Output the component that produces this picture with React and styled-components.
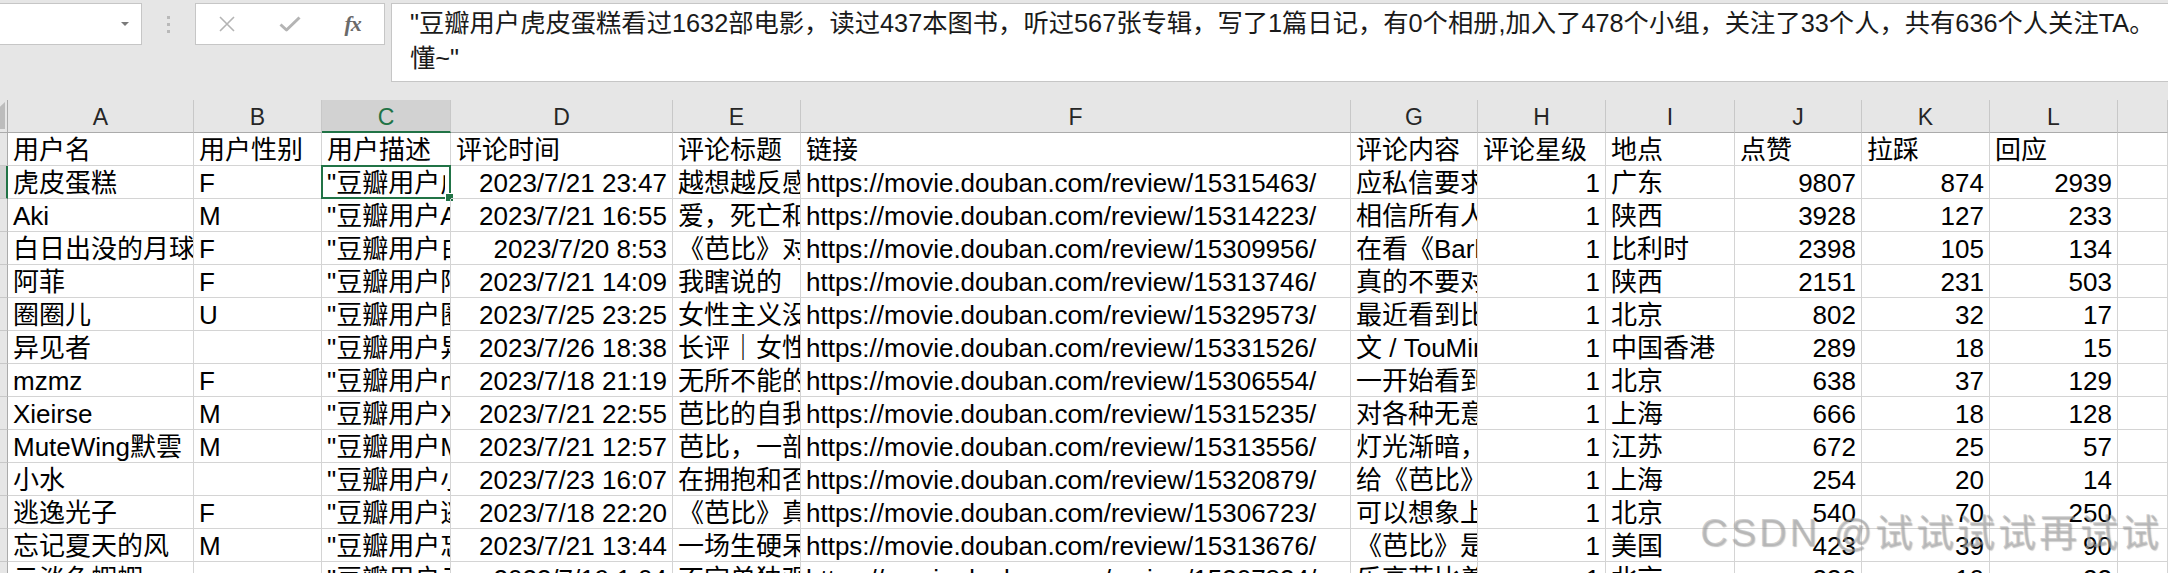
import React from "react";
import styled, { createGlobalStyle } from "styled-components";

const GlobalStyle = createGlobalStyle`
  html, body { margin: 0; padding: 0; background: #e6e6e6; overflow: hidden; }
  body { font-family: "Liberation Sans", "Noto Sans CJK SC", sans-serif; color: #000; }
  * { box-sizing: border-box; }
`;

const GREEN = "#217346";

const Page = styled.div`
  position: relative;
  width: 2168px;
  height: 573px;
  overflow: hidden;
  background: #e6e6e6;
`;

/* ---------- formula bar ---------- */
const TopBar = styled.div`
  display: flex;
  align-items: flex-start;
  height: 100px;
  padding-top: 3px;
`;

const NameBox = styled.div`
  width: 142px;
  height: 42px;
  background: #fff;
  border: 1px solid #c6c6c6;
  border-left: none;
  display: flex;
  align-items: center;
  justify-content: flex-end;
  padding-right: 12px;
`;

const DropArrow = styled.span`
  width: 0;
  height: 0;
  border-left: 4px solid transparent;
  border-right: 4px solid transparent;
  border-top: 4px solid #7a7a7a;
`;

const Grip = styled.div`
  width: 53px;
  height: 42px;
  display: flex;
  flex-direction: column;
  align-items: center;
  justify-content: center;
  gap: 4px;
`;

const GripDot = styled.span`
  width: 3px;
  height: 3px;
  background: #b9b9b9;
`;

const FxBox = styled.div`
  width: 190px;
  height: 42px;
  background: #fff;
  border: 1px solid #c6c6c6;
  display: grid;
  grid-template-columns: repeat(3, 1fr);
  align-items: center;
  justify-items: center;
`;

const FxLabel = styled.span`
  font-family: "Liberation Serif", serif;
  font-style: italic;
  font-weight: bold;
  font-size: 22px;
  color: #6a6a6a;
  letter-spacing: -1px;
`;

const FormulaBox = styled.div`
  flex: 1;
  margin-left: 6px;
  height: 79px;
  background: #fff;
  border: 1px solid #c6c6c6;
  border-right: none;
  padding: 2px 0 0 18px;
  font-size: 25.3px;
  line-height: 35px;
  white-space: nowrap;
  overflow: hidden;
  color: #1a1a1a;
`;

/* ---------- sheet grid ---------- */
const Sheet = styled.div`
  display: grid;
  grid-template-columns: 8px 186px 128px 129px 222px 128px 550px 127px 128px 129px 127px 128px 128px 1fr;
  grid-template-rows: 33px;
  grid-auto-rows: 33px;
  background: #fff;
`;

const Corner = styled.div`
  position: relative;
  background: #e6e6e6;
  border-right: 1px solid #ababab;
  border-bottom: 1px solid #ababab;
  &::after {
    content: "";
    position: absolute;
    left: 0;
    top: 2px;
    width: 5px;
    height: 27px;
    background: #bcbcbc;
    clip-path: polygon(100% 0, 100% 100%, 0 100%, 0 18%);
  }
`;

const ColHead = styled.div`
  background: ${(p) => (p.$selected ? "#d2d2d2" : "#e6e6e6")};
  color: ${(p) => (p.$selected ? GREEN : "#262626")};
  border-right: 1px solid #c8c8c8;
  border-bottom: ${(p) => (p.$selected ? `2px solid ${GREEN}` : "1px solid #ababab")};
  font-size: 23px;
  line-height: 34px;
  text-align: center;
`;

const RowHead = styled.div`
  background: ${(p) => (p.$selected ? "#d2d2d2" : "#e6e6e6")};
  border-right: ${(p) => (p.$selected ? `2px solid ${GREEN}` : "1px solid #ababab")};
  border-bottom: 1px solid #c8c8c8;
`;

const Cell = styled.div`
  position: relative;
  border-right: 1px solid #d4d4d4;
  border-bottom: 1px solid #d4d4d4;
  padding: 0 5px;
  font-size: 26px;
  line-height: 34px;
  white-space: nowrap;
  overflow: ${(p) => (p.$active ? "visible" : "hidden")};
  text-align: ${(p) => (p.$num ? "right" : "left")};
`;

const CellText = styled.span`
  display: block;
  overflow: hidden;
`;

const ActiveFrame = styled.span`
  position: absolute;
  left: -1px;
  top: -1px;
  right: -1px;
  bottom: -1px;
  border: 2px solid ${GREEN};
  pointer-events: none;
  &::after {
    content: "";
    position: absolute;
    right: -5px;
    bottom: -5px;
    width: 7px;
    height: 7px;
    background: ${GREEN};
    border: 1px solid #fff;
  }
`;

const Watermark = styled.div`
  position: absolute;
  right: 6px;
  bottom: 16px;
  font-family: "Liberation Sans", "Noto Sans CJK SC", sans-serif;
  font-size: 38px;
  letter-spacing: 3px;
  color: rgba(170, 170, 170, 0.55);
  text-shadow: 1px 1px 1px rgba(90, 90, 90, 0.35);
  pointer-events: none;
  white-space: nowrap;
`;

const COLS = ["A", "B", "C", "D", "E", "F", "G", "H", "I", "J", "K", "L", ""];
const NUMERIC = [false, false, false, true, false, false, false, true, false, true, true, true, false];

const HEADER = ["用户名", "用户性别", "用户描述", "评论时间", "评论标题", "链接", "评论内容", "评论星级", "地点", "点赞", "拉踩", "回应", ""];

const url = (id) => `https://movie.douban.com/review/${id}/`;
const desc = (n) => `"豆瓣用户${n}看过很多部电影，读过很多本图书"`;

const ROWS = [
  ["虎皮蛋糕", "F", desc("虎皮蛋糕"), "2023/7/21 23:47", "越想越反感", url(15315463), "应私信要求补充", "1", "广东", "9807", "874", "2939"],
  ["Aki", "M", desc("Aki"), "2023/7/21 16:55", "爱，死亡和机器人", url(15314223), "相信所有人都会", "1", "陕西", "3928", "127", "233"],
  ["白日出没的月球", "F", desc("白日出没的月球"), "2023/7/20 8:53", "《芭比》对男性", url(15309956), "在看《Barbie》之前", "1", "比利时", "2398", "105", "134"],
  ["阿菲", "F", desc("阿菲"), "2023/7/21 14:09", "我瞎说的", url(15313746), "真的不要对这部", "1", "陕西", "2151", "231", "503"],
  ["圈圈儿", "U", desc("圈圈儿"), "2023/7/25 23:25", "女性主义没有", url(15329573), "最近看到比较多", "1", "北京", "802", "32", "17"],
  ["异见者", "", desc("异见者"), "2023/7/26 18:38", "长评｜女性主义", url(15331526), "文 / TouMing", "1", "中国香港", "289", "18", "15"],
  ["mzmz", "F", desc("mzmz"), "2023/7/18 21:19", "无所不能的芭比", url(15306554), "一开始看到预告", "1", "北京", "638", "37", "129"],
  ["Xieirse", "M", desc("Xieirse"), "2023/7/21 22:55", "芭比的自我觉醒", url(15315235), "对各种无意义的", "1", "上海", "666", "18", "128"],
  ["MuteWing默雲", "M", desc("MuteWing默雲"), "2023/7/21 12:57", "芭比，一部电影", url(15313556), "灯光渐暗，影片", "1", "江苏", "672", "25", "57"],
  ["小水", "", desc("小水"), "2023/7/23 16:07", "在拥抱和否定之间", url(15320879), "给《芭比》打分", "1", "上海", "254", "20", "14"],
  ["逃逸光子", "F", desc("逃逸光子"), "2023/7/18 22:20", "《芭比》真的是", url(15306723), "可以想象上映后", "1", "北京", "540", "70", "250"],
  ["忘记夏天的风", "M", desc("忘记夏天的风"), "2023/7/21 13:44", "一场生硬呆板的", url(15313676), "《芭比》是一部", "1", "美国", "423", "39", "90"],
  ["云淡色蝦蝦", "", desc("云淡色蝦蝦"), "2023/7/19 1:04", "不宜单独观看", url(15307834), "乐高芭比着陆", "1", "北京", "236", "10", "22"],
];

const FORMULA_1 =
  "\"豆瓣用户虎皮蛋糕看过1632部电影，读过437本图书，听过567张专辑，写了1篇日记，有0个相册,加入了478个小组，关注了33个人，共有636个人关注TA。";
const FORMULA_2 = "懂~\"";

function CrossIcon() {
  return (
    <svg width="18" height="18" viewBox="0 0 18 18">
      <path d="M2 2 L16 16 M16 2 L2 16" stroke="#b4b4b4" strokeWidth="1.6" fill="none" />
    </svg>
  );
}

function CheckIcon() {
  return (
    <svg width="22" height="16" viewBox="0 0 22 16">
      <path d="M1.5 8.5 L7.5 14 L20.5 1.5" stroke="#b4b4b4" strokeWidth="3" fill="none" strokeLinejoin="round" />
    </svg>
  );
}

export default function App() {
  const activeRow = 0;
  const activeCol = 2;
  return (
    <Page>
      <GlobalStyle />
      <TopBar>
        <NameBox>
          <DropArrow />
        </NameBox>
        <Grip>
          <GripDot />
          <GripDot />
          <GripDot />
        </Grip>
        <FxBox>
          <CrossIcon />
          <CheckIcon />
          <FxLabel>fx</FxLabel>
        </FxBox>
        <FormulaBox>
          {FORMULA_1}
          <br />
          {FORMULA_2}
        </FormulaBox>
      </TopBar>
      <Sheet>
        <Corner />
        {COLS.map((c, i) => (
          <ColHead key={"h" + i} $selected={i === activeCol}>
            {c}
          </ColHead>
        ))}
        <RowHead />
        {HEADER.map((t, i) => (
          <Cell key={"t" + i}>{t}</Cell>
        ))}
        {ROWS.map((row, r) => (
          <React.Fragment key={"r" + r}>
            <RowHead $selected={r === activeRow} />
            {row.map((v, c) => {
              const active = r === activeRow && c === activeCol;
              return (
                <Cell key={c} $num={NUMERIC[c]} $active={active}>
                  {active ? (
                    <>
                      <CellText>{v}</CellText>
                      <ActiveFrame />
                    </>
                  ) : (
                    v
                  )}
                </Cell>
              );
            })}
            <Cell />
          </React.Fragment>
        ))}
      </Sheet>
      <Watermark>CSDN @试试试试再试试</Watermark>
    </Page>
  );
}
